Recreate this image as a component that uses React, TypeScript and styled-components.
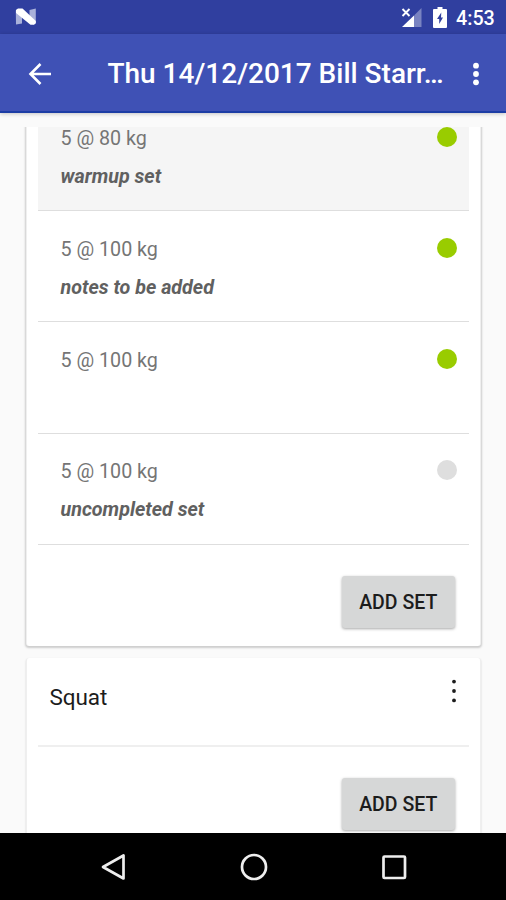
import React from "react";
import styled, { createGlobalStyle } from "styled-components";

const GlobalStyle = createGlobalStyle`
  * { box-sizing: border-box; }
  body { margin: 0; background: #fafafa; font-family: Roboto, sans-serif; }
`;

const Screen = styled.div`
  width: 506px;
  height: 900px;
  display: flex;
  flex-direction: column;
  overflow: hidden;
  background: #fafafa;
`;

const StatusBar = styled.header`
  height: 34px;
  flex: none;
  display: flex;
  align-items: center;
  padding: 0 11px 0 15px;
  background: #303f9f;
  color: #fff;
`;

const StatusIcons = styled.div`
  margin-left: auto;
  display: flex;
  align-items: center;
  gap: 11px;
`;

const Clock = styled.span`
  width: 39px;
  margin-left: -2px;
  font-size: 19.7px;
  line-height: 34px;
  font-weight: 500;
  padding-top: 3px;
  white-space: nowrap;
`;

const AppBar = styled.nav`
  height: 79px;
  flex: none;
  display: flex;
  align-items: center;
  padding: 2px 0 0 22px;
  background: #3f51b5;
  border-bottom: 2px solid #1c3da5;
  color: #fff;
  z-index: 1;
  box-shadow: 0 1px 4px rgba(0, 0, 0, 0.22);
`;

const Title = styled.h1`
  width: 350px;
  margin: 0 0 0 49.5px;
  font-size: 28px;
  line-height: 36px;
  font-weight: 500;
  letter-spacing: -0.01px;
  white-space: nowrap;
`;

const IconButton = styled.button`
  display: flex;
  align-items: center;
  justify-content: center;
  width: 36px;
  height: 44px;
  padding: 0;
  border: 0;
  background: none;
  color: inherit;
`;

const Scroller = styled.main`
  flex: 1;
  min-height: 0;
  margin-top: 14px;
  padding: 0 25px 0 26px;
  overflow: hidden;
`;

const Card = styled.section<{ $continued?: boolean }>`
  margin: ${(p) => (p.$continued ? "-27px 0 12px" : "0")};
  height: ${(p) => (p.$continued ? "546px" : "255px")};
  padding: 0 11px;
  background: #fff;
  border: 1px solid #efefef;
  border-width: 0 1px;
  border-radius: 3px;
  box-shadow: 0 1px 2px ${(p) => (p.$continued ? "1px" : "0")} rgba(0, 0, 0, 0.18);
`;

const SetRow = styled.div<{ $warmup?: boolean }>`
  display: flex;
  justify-content: space-between;
  height: 111.2px;
  padding: 25.6px 12.5px 0 22.5px;
  background: ${(p) => (p.$warmup ? "#f5f5f5" : "#fff")};
  border-bottom: 1px solid #dedede;
`;

const SetText = styled.div`
  color: #757575;
  font-size: 19.7px;
  line-height: 26px;
`;

const Load = styled.div``;

const Note = styled.div`
  margin-top: 12px;
  color: #606060;
  font-weight: 700;
  font-style: italic;
`;

const Dot = styled.span<{ $done: boolean }>`
  width: 20px;
  height: 20px;
  margin-top: 1px;
  border-radius: 50%;
  background: ${(p) => (p.$done ? "#99cc00" : "#dedede")};
`;

const CardHead = styled.div`
  display: flex;
  justify-content: space-between;
  height: 89px;
  padding: 24px 0 0 11.5px;
  border-bottom: 2px solid #efefef;
  color: #1c1c1c;
`;

const Exercise = styled.h2`
  margin: 0;
  font-size: 22.5px;
  line-height: 30px;
  font-weight: 400;
  letter-spacing: -0.1px;
`;

const CardMenu = styled(IconButton)`
  width: 30px;
  height: 30px;
  margin-top: -6px;
`;

const Actions = styled.div`
  display: flex;
  justify-content: flex-end;
  padding: 31px 14.5px 0 0;
`;

const AddButton = styled.button`
  width: 112.5px;
  height: 52px;
  padding: 2px 0 0;
  border: 0;
  border-radius: 3px;
  background: #d6d7d7;
  box-shadow: 0 1px 3px rgba(0, 0, 0, 0.35);
  color: #1c1c1c;
  font: 500 19.5px/50px Roboto, sans-serif;
`;

const SystemNav = styled.footer`
  height: 67px;
  flex: none;
  display: flex;
  align-items: center;
  justify-content: space-between;
  padding: 0 96px 0 97px;
  background: #000;
`;

const sets = [
  { load: "5 @ 80 kg", note: "warmup set", done: true, warmup: true },
  { load: "5 @ 100 kg", note: "notes to be added", done: true },
  { load: "5 @ 100 kg", note: "", done: true },
  { load: "5 @ 100 kg", note: "uncompleted set", done: false },
];

const Dots = ({ r, gap }: { r: number; gap: number }) => (
  <svg width="10" height="30" viewBox="-5 -15 10 30" fill="currentColor">
    <circle cy={-gap} r={r} />
    <circle r={r} />
    <circle cy={gap} r={r} />
  </svg>
);

export default function App() {
  return (
    <>
      <GlobalStyle />
      <Screen>
        <StatusBar>
          <svg width="22" height="18" viewBox="0 0 22 18">
            <path d="M.8 2.500 2.500 1 7 4v11.500L1 16.500ZM14.500 2 20.800.5V15l-2 1.500-4.300-3Z" fill="#a9b1da" />
            <path d="M1 2 3 .5h4.500L20.800 13v2.200L19 16.800h-3.500L1 5Z" fill="#fff" />
          </svg>
          <StatusIcons>
            <svg width="21" height="21" viewBox="0 0 21 21">
              <path d="M20.500 1v19H13V8.500Z" fill="#7983c1" />
              <path d="M13 8.500V20H1Z" fill="#fff" />
              <path d="m1.500 2 7 7m0-7-7 7" stroke="#fff" strokeWidth="1.900" />
            </svg>
            <svg width="14" height="21" viewBox="0 0 14 21">
              <path d="M4.500 0h5v2H13q1 0 1 1v17q0 1-1 1H1q-1 0-1-1V3q0-1 1-1h3.500Z" fill="#fff" />
              <path d="M8.300 5.500 4 12h2.200v5L10 10.500H8Z" fill="#303f9f" />
            </svg>
            <Clock>4:53</Clock>
          </StatusIcons>
        </StatusBar>
        <AppBar>
          <IconButton aria-label="Back">
            <svg width="24" height="24" viewBox="0 0 24 24" fill="none" stroke="#fff" strokeWidth="2.600">
              <path d="M23 12H2.500M12.500 2 2.500 12 12.500 22" />
            </svg>
          </IconButton>
          <Title>Thu 14/12/2017 Bill Starr…</Title>
          <IconButton aria-label="More options">
            <Dots r={2.9} gap={8.3} />
          </IconButton>
        </AppBar>
        <Scroller>
          <Card $continued>
            {sets.map((s, i) => (
              <SetRow key={i} $warmup={s.warmup}>
                <SetText>
                  <Load>{s.load}</Load>
                  <Note>{s.note}</Note>
                </SetText>
                <Dot $done={s.done} />
              </SetRow>
            ))}
            <Actions>
              <AddButton>ADD SET</AddButton>
            </Actions>
          </Card>
          <Card>
            <CardHead>
              <Exercise>Squat</Exercise>
              <CardMenu aria-label="Exercise options">
                <Dots r={1.9} gap={9.4} />
              </CardMenu>
            </CardHead>
            <Actions>
              <AddButton>ADD SET</AddButton>
            </Actions>
          </Card>
        </Scroller>
        <SystemNav>
          <svg width="32" height="32" viewBox="0 0 32 32" fill="none" stroke="#eee" strokeWidth="2.700" strokeLinejoin="round">
            <path d="M26.500 4.500v23L6 16Z" />
          </svg>
          <svg width="32" height="32" viewBox="0 0 32 32" fill="none" stroke="#eee" strokeWidth="2.700">
            <circle cx="16" cy="16" r="12" />
          </svg>
          <svg width="32" height="32" viewBox="0 0 32 32" fill="none" stroke="#eee" strokeWidth="2.700">
            <rect x="5.500" y="5.500" width="21.500" height="21.500" rx="1" />
          </svg>
        </SystemNav>
      </Screen>
    </>
  );
}
